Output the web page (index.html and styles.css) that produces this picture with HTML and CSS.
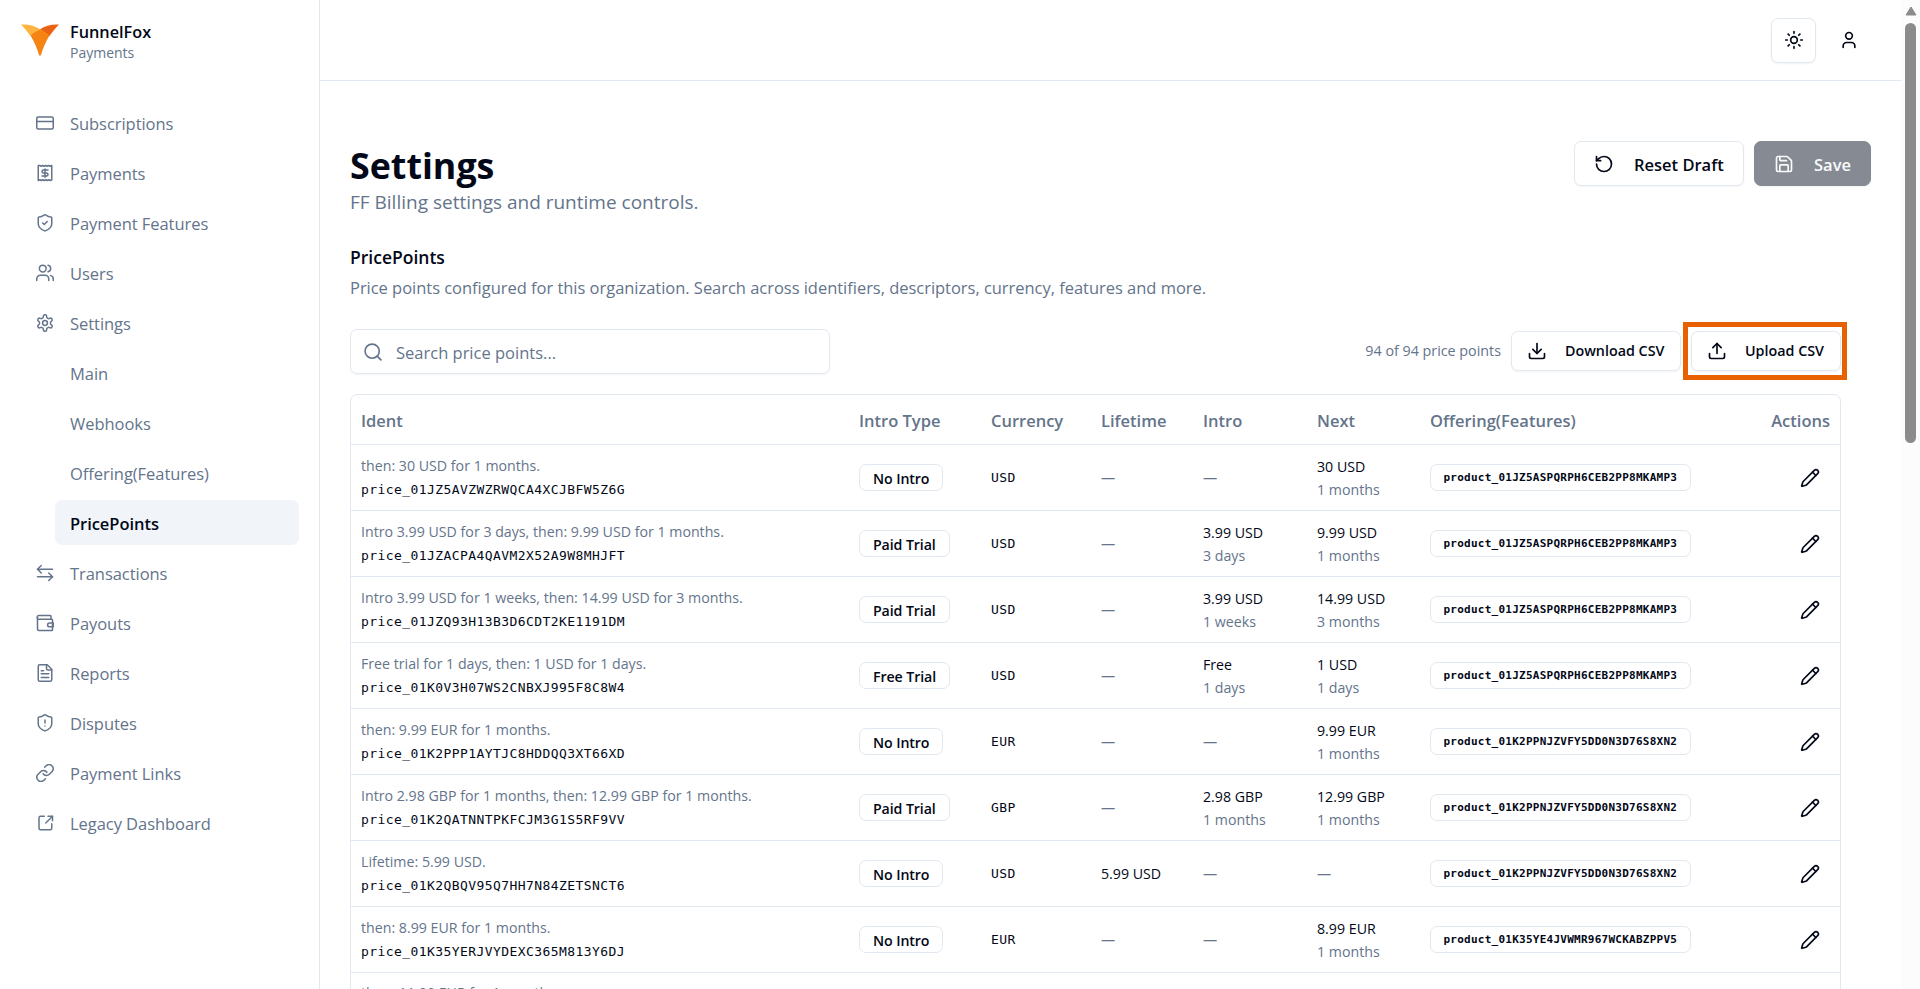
FILE: index.html
```html
<!DOCTYPE html>
<html lang="en">

<head>
  <meta charset="UTF-8">
  <meta name="viewport" content="width=device-width, initial-scale=1.0">
  <title>FunnelFox Payments - Settings</title>
  <link rel="stylesheet" href="styles.css">
</head>

<body>
  <!-- shared icons -->
  <svg class="sprite" width="0" height="0">
    <symbol id="pencil" viewBox="0 0 24 24">
      <path d="M21.174 6.812a1 1 0 0 0-3.986-3.987L3.842 16.174a2 2 0 0 0-.5.83l-1.321 4.352a.5.5 0 0 0 .623.622l4.353-1.32a2 2 0 0 0 .83-.497z" />
      <path d="m15 5 4 4" />
    </symbol>
  </svg>

  <div class="app">
    <aside class="sidebar">
      <div class="brand">
        <svg class="brand-logo" viewBox="0 0 38 32">
          <path d="M0 .5C7 0 14 1.500 19 5.200L9.500 12C6.500 8 3.500 4 0 .5z" fill="#ffb340" />
          <path d="M38 .5C31 0 24 1.500 19 5.200L28.500 12C31.500 8 34.500 4 38 .5z" fill="#ea6315" />
          <path d="M19 5.200C15.500 7 12 9 9.500 11.500C13 17 16 24 18 31Q19 32.500 20 31C22 24 25 17 28.500 11.500C26 9 22.500 7 19 5.200z" fill="#f58413" />
        </svg>
        <div>
          <p class="brand-name">FunnelFox</p>
          <p class="brand-sub">Payments</p>
        </div>
      </div>

      <nav class="nav">
        <a class="nav-item"><svg class="icon" viewBox="0 0 24 24"><rect width="22" height="16" x="1" y="4" rx="2" /><path d="M1 10h22" /></svg><span>Subscriptions</span></a>
        <a class="nav-item"><svg class="icon" viewBox="0 0 24 24"><path d="M3 2v20l2-1 2 1 2-1 2 1 2-1 2 1 2-1 2 1 2-1V2l-2 1-2-1-2 1-2-1-2 1-2-1-2 1-2-1z" /><path d="M16 8h-6a2 2 0 1 0 0 4h4a2 2 0 1 1 0 4H8" /><path d="M12 17.500v-11" /></svg><span>Payments</span></a>
        <a class="nav-item"><svg class="icon" viewBox="0 0 24 24"><path d="M21 13c0 5-3.500 7.500-8.660 9.450a1 1 0 0 1-.67-.01C6.500 20.500 3 18 3 13V5a1 1 0 0 1 1-1c2 0 5-1.200 7.240-2.720a1.170 1.170 0 0 1 1.520 0C15 2.810 18 4 20 4a1 1 0 0 1 1 1z" /><path d="m9 12 2 2 4-4" /></svg><span>Payment Features</span></a>
        <a class="nav-item"><svg class="icon" viewBox="0 0 24 24"><path d="M17 22v-2a5 5 0 0 0-5-5H6a5 5 0 0 0-5 5v2" /><circle cx="9" cy="6" r="4.500" /><path d="M23 22v-2a5 5 0 0 0-3.500-4.800" /><path d="M16 1.600a4.500 4.500 0 0 1 0 8.800" /></svg><span>Users</span></a>
        <a class="nav-item"><svg class="icon" viewBox="0 0 24 24"><path d="M12.220 1h-.44a2 2 0 0 0-2 2v.7a2 2 0 0 1-1 1.730l-.83.48a2 2 0 0 1-2 0l-.35-.2a2 2 0 0 0-2.730.73l-.22.38a2 2 0 0 0 .73 2.730l.35.25a2 2 0 0 1 1 1.720v.91a2 2 0 0 1-1 1.740l-.35.24a2 2 0 0 0-.73 2.730l.22.38a2 2 0 0 0 2.730.73l.35-.2a2 2 0 0 1 2 0l.83.48a2 2 0 0 1 1 1.730V21a2 2 0 0 0 2 2h.44a2 2 0 0 0 2-2v-.7a2 2 0 0 1 1-1.730l.83-.48a2 2 0 0 1 2 0l.35.2a2 2 0 0 0 2.730-.73l.22-.38a2 2 0 0 0-.73-2.730l-.35-.24a2 2 0 0 1-1-1.740v-.91a2 2 0 0 1 1-1.720l.35-.25a2 2 0 0 0 .73-2.730l-.22-.38a2 2 0 0 0-2.730-.73l-.35.2a2 2 0 0 1-2 0l-.83-.48a2 2 0 0 1-1-1.730V3a2 2 0 0 0-2-2z" /><circle cx="12" cy="12" r="3.200" /></svg><span>Settings</span></a>
        <div class="subnav">
          <a class="nav-item"><span>Main</span></a>
          <a class="nav-item"><span>Webhooks</span></a>
          <a class="nav-item"><span>Offering(Features)</span></a>
          <a class="nav-item is-active"><span>PricePoints</span></a>
        </div>
        <a class="nav-item"><svg class="icon" viewBox="0 0 24 24"><path d="m7 2-5 5 5 5" /><path d="M2 7h20" /><path d="m17 22 5-5-5-5" /><path d="M22 17H2" /></svg><span>Transactions</span></a>
        <a class="nav-item"><svg class="icon" viewBox="0 0 24 24"><path d="M20 7V3a1 1 0 0 0-1-1H4a2 2 0 0 0 0 5h17a1 1 0 0 1 1 1v13a1 1 0 0 1-1 1H4a2 2 0 0 1-2-2V4" /><path d="M23 12h-5a2 2 0 0 0 0 5h5z" /></svg><span>Payouts</span></a>
        <a class="nav-item"><svg class="icon" viewBox="0 0 24 24"><path d="M15 1H5a2 2 0 0 0-2 2v18a2 2 0 0 0 2 2h14a2 2 0 0 0 2-2V7z" /><path d="M14 1v5a2 2 0 0 0 2 2h5" /><path d="M10 9H7" /><path d="M17 13H7" /><path d="M17 18H7" /></svg><span>Reports</span></a>
        <a class="nav-item"><svg class="icon" viewBox="0 0 24 24"><path d="M21 13c0 5-3.500 7.500-8.660 9.450a1 1 0 0 1-.67-.01C6.500 20.500 3 18 3 13V5a1 1 0 0 1 1-1c2 0 5-1.200 7.240-2.720a1.170 1.170 0 0 1 1.520 0C15 2.810 18 4 20 4a1 1 0 0 1 1 1z" /><path d="M12 8v4" /><path d="M12 16h.01" /></svg><span>Disputes</span></a>
        <a class="nav-item"><svg class="icon" viewBox="0 0 24 24"><path d="M9.500 13a5.500 5.500 0 0 0 8.300.6l3.700-3.700a5.500 5.500 0 0 0-7.700-7.800L11.500 4.400" /><path d="M14.500 11a5.500 5.500 0 0 0-8.300-.6L2.500 14.100a5.500 5.500 0 0 0 7.700 7.800l2.300-2.300" /></svg><span>Payment Links</span></a>
        <a class="nav-item"><svg class="icon" viewBox="0 0 24 24"><path d="M16 3h6v6" /><path d="m13 12 9-9" /><path d="M21 13v6a2 2 0 0 1-2 2H6a2 2 0 0 1-2-2V5a2 2 0 0 1 2-2h5" /></svg><span>Legacy Dashboard</span></a>
      </nav>
    </aside>

    <main class="main">
      <header class="topbar">
        <button class="btn btn-icon"><svg class="icon icon-lg" viewBox="0 0 24 24"><circle cx="12" cy="12" r="4" /><path d="M12 2v2" /><path d="M12 20v2" /><path d="m4.930 4.930 1.410 1.410" /><path d="m17.660 17.660 1.410 1.410" /><path d="M2 12h2" /><path d="M20 12h2" /><path d="m6.340 17.660-1.410 1.410" /><path d="m19.070 4.930-1.410 1.410" /></svg></button>
        <svg class="icon icon-lg" viewBox="0 0 24 24"><path d="M19 21v-2a4 4 0 0 0-4-4H9a4 4 0 0 0-4 4v2" /><circle cx="12" cy="7" r="4" /></svg>
      </header>

      <div class="content">
        <div class="page-head">
          <div>
            <h1>Settings</h1>
            <p class="lead">FF Billing settings and runtime controls.</p>
          </div>
          <div class="page-actions">
            <button class="btn btn-reset"><svg class="icon icon-lg" viewBox="0 0 24 24"><path d="M3 12a9 9 0 1 0 9-9 9.750 9.750 0 0 0-6.740 2.740L3 8" /><path d="M3 3v5h5" /></svg><span>Reset Draft</span></button>
            <button class="btn btn-save" disabled><svg class="icon icon-lg" viewBox="0 0 24 24"><path d="M15.200 3a2 2 0 0 1 1.400.6l3.800 3.800a2 2 0 0 1 .6 1.400V19a2 2 0 0 1-2 2H5a2 2 0 0 1-2-2V5a2 2 0 0 1 2-2z" /><path d="M17 21v-7a1 1 0 0 0-1-1H8a1 1 0 0 0-1 1v7" /><path d="M7 3v4a1 1 0 0 0 1 1h7" /></svg><span>Save</span></button>
          </div>
        </div>

        <section class="section">
          <h2>PricePoints</h2>
          <p class="section-desc">Price points configured for this organization. Search across identifiers, descriptors, currency, features and more.</p>

          <div class="toolbar">
            <div class="search">
              <svg class="icon icon-lg" viewBox="0 0 24 24"><circle cx="11" cy="11" r="8.500" /><path d="m21.500 21.500-4.500-4.500" /></svg>
              <span>Search price points...</span>
            </div>
            <div class="toolbar-right">
              <span class="count">94 of 94 price points</span>
              <button class="btn btn-sm btn-download"><svg class="icon icon-lg" viewBox="0 0 24 24"><path d="M21 15v4a2 2 0 0 1-2 2H5a2 2 0 0 1-2-2v-4" /><path d="m7 10 5 5 5-5" /><path d="M12 15V3" /></svg>Download CSV</button>
              <button class="btn btn-sm btn-upload"><svg class="icon icon-lg" viewBox="0 0 24 24"><path d="M21 15v4a2 2 0 0 1-2 2H5a2 2 0 0 1-2-2v-4" /><path d="m17 8-5-5-5 5" /><path d="M12 3v12" /></svg>Upload CSV</button>
            </div>
          </div>

          <div class="table">
            <div class="row row-head">
              <span>Ident</span><span>Intro Type</span><span>Currency</span><span>Lifetime</span><span>Intro</span><span>Next</span><span>Offering(Features)</span><span class="right">Actions</span>
            </div>
            <div class="row">
              <div class="ident"><p>then: 30 USD for 1 months.</p><code>price_01JZ5AVZWZRWQCA4XCJBFW5Z6G</code></div>
              <div><span class="badge">No Intro</span></div>
              <code>USD</code>
              <div class="muted">—</div>
              <div class="muted">—</div>
              <div class="price"><p>30 USD</p><p class="muted">1 months</p></div>
              <div><span class="badge badge-code">product_01JZ5ASPQRPH6CEB2PP8MKAMP3</span></div>
              <div class="edit"><svg class="icon"><use href="#pencil" /></svg></div>
            </div>
            <div class="row">
              <div class="ident"><p>Intro 3.99 USD for 3 days, then: 9.99 USD for 1 months.</p><code>price_01JZACPA4QAVM2X52A9W8MHJFT</code></div>
              <div><span class="badge">Paid Trial</span></div>
              <code>USD</code>
              <div class="muted">—</div>
              <div class="price"><p>3.99 USD</p><p class="muted">3 days</p></div>
              <div class="price"><p>9.99 USD</p><p class="muted">1 months</p></div>
              <div><span class="badge badge-code">product_01JZ5ASPQRPH6CEB2PP8MKAMP3</span></div>
              <div class="edit"><svg class="icon"><use href="#pencil" /></svg></div>
            </div>
            <div class="row">
              <div class="ident"><p>Intro 3.99 USD for 1 weeks, then: 14.99 USD for 3 months.</p><code>price_01JZQ93H13B3D6CDT2KE1191DM</code></div>
              <div><span class="badge">Paid Trial</span></div>
              <code>USD</code>
              <div class="muted">—</div>
              <div class="price"><p>3.99 USD</p><p class="muted">1 weeks</p></div>
              <div class="price"><p>14.99 USD</p><p class="muted">3 months</p></div>
              <div><span class="badge badge-code">product_01JZ5ASPQRPH6CEB2PP8MKAMP3</span></div>
              <div class="edit"><svg class="icon"><use href="#pencil" /></svg></div>
            </div>
            <div class="row">
              <div class="ident"><p>Free trial for 1 days, then: 1 USD for 1 days.</p><code>price_01K0V3H07WS2CNBXJ995F8C8W4</code></div>
              <div><span class="badge">Free Trial</span></div>
              <code>USD</code>
              <div class="muted">—</div>
              <div class="price"><p>Free</p><p class="muted">1 days</p></div>
              <div class="price"><p>1 USD</p><p class="muted">1 days</p></div>
              <div><span class="badge badge-code">product_01JZ5ASPQRPH6CEB2PP8MKAMP3</span></div>
              <div class="edit"><svg class="icon"><use href="#pencil" /></svg></div>
            </div>
            <div class="row">
              <div class="ident"><p>then: 9.99 EUR for 1 months.</p><code>price_01K2PPP1AYTJC8HDDQQ3XT66XD</code></div>
              <div><span class="badge">No Intro</span></div>
              <code>EUR</code>
              <div class="muted">—</div>
              <div class="muted">—</div>
              <div class="price"><p>9.99 EUR</p><p class="muted">1 months</p></div>
              <div><span class="badge badge-code">product_01K2PPNJZVFY5DD0N3D76S8XN2</span></div>
              <div class="edit"><svg class="icon"><use href="#pencil" /></svg></div>
            </div>
            <div class="row">
              <div class="ident"><p>Intro 2.98 GBP for 1 months, then: 12.99 GBP for 1 months.</p><code>price_01K2QATNNTPKFCJM3G1S5RF9VV</code></div>
              <div><span class="badge">Paid Trial</span></div>
              <code>GBP</code>
              <div class="muted">—</div>
              <div class="price"><p>2.98 GBP</p><p class="muted">1 months</p></div>
              <div class="price"><p>12.99 GBP</p><p class="muted">1 months</p></div>
              <div><span class="badge badge-code">product_01K2PPNJZVFY5DD0N3D76S8XN2</span></div>
              <div class="edit"><svg class="icon"><use href="#pencil" /></svg></div>
            </div>
            <div class="row">
              <div class="ident"><p>Lifetime: 5.99 USD.</p><code>price_01K2QBQV95Q7HH7N84ZETSNCT6</code></div>
              <div><span class="badge">No Intro</span></div>
              <code>USD</code>
              <div>5.99 USD</div>
              <div class="muted">—</div>
              <div class="muted">—</div>
              <div><span class="badge badge-code">product_01K2PPNJZVFY5DD0N3D76S8XN2</span></div>
              <div class="edit"><svg class="icon"><use href="#pencil" /></svg></div>
            </div>
            <div class="row">
              <div class="ident"><p>then: 8.99 EUR for 1 months.</p><code>price_01K35YERJVYDEXC365M813Y6DJ</code></div>
              <div><span class="badge">No Intro</span></div>
              <code>EUR</code>
              <div class="muted">—</div>
              <div class="muted">—</div>
              <div class="price"><p>8.99 EUR</p><p class="muted">1 months</p></div>
              <div><span class="badge badge-code">product_01K35YE4JVWMR967WCKABZPPV5</span></div>
              <div class="edit"><svg class="icon"><use href="#pencil" /></svg></div>
            </div>
            <div class="row row-last">
              <div class="ident"><p>then: 11.99 EUR for 1 months.</p></div>
            </div>
          </div>
        </section>
      </div>
    </main>

    <div class="scrollbar">
      <svg class="arrow" viewBox="0 0 12 10"><path d="M6 1 11 9H1z" /></svg>
      <div class="thumb"></div>
      <svg class="arrow arrow-down" viewBox="0 0 12 10"><path d="M6 9 1 1h10z" /></svg>
    </div>
  </div>
</body>

</html>
```
FILE: styles.css
```css
:root {
  --fg: #020817;
  --muted: #64748b;
  --border: #e2e8f0;
  --accent: #f1f5f9;
  --highlight: #e86100;
}

*,
*:before,
*:after {
  box-sizing: border-box;
}

body {
  margin: 0;
  height: 100vh;
  overflow: hidden;
  background: #fff;
  color: var(--fg);
  font-family: "Open Sans", sans-serif;
  font-size: 16.5px;
}

h1,
h2,
p {
  margin: 0;
}

.sprite {
  display: none;
}

.app {
  display: grid;
  grid-template-columns: 320px 1fr 19px;
  height: 989px;
  overflow: hidden;
}

.icon {
  width: 18px;
  height: 18px;
  flex: none;
  fill: none;
  stroke: currentColor;
  stroke-width: 2;
  stroke-linecap: round;
  stroke-linejoin: round;
}

.icon-lg {
  width: 20px;
  height: 20px;
}

/* sidebar */
.sidebar {
  border-right: 1px solid var(--border);
}

.brand {
  display: flex;
  gap: 11px;
  height: 80px;
  padding: 20px 0 0 21px;
}

.brand-logo {
  width: 38px;
  height: 32px;
  margin-top: 4px;
}

.brand-name {
  padding-top: 1px;
  font-size: 16.3px;
  line-height: 22px;
  font-weight: 600;
}

.brand-sub {
  font-size: 14px;
  line-height: 19px;
  color: var(--muted);
}

.nav {
  display: flex;
  flex-direction: column;
  gap: 5px;
  padding: 20px 20px 0 21px;
}

.nav-item {
  display: flex;
  align-items: center;
  gap: 16px;
  height: 45px;
  padding: 0 15px;
  border-radius: 7px;
  color: var(--muted);
}

.nav-item span {
  padding-top: 2px;
  letter-spacing: -0.05px;
}

.subnav {
  display: flex;
  flex-direction: column;
  gap: 5px;
  padding-left: 34px;
}

.is-active {
  background: var(--accent);
  color: var(--fg);
  font-weight: 600;
}

/* top bar */
.main {
  min-width: 0;
}

.topbar {
  display: flex;
  align-items: center;
  justify-content: flex-end;
  gap: 23px;
  height: 81px;
  padding-right: 42px;
  border-bottom: 1px solid var(--border);
}

.btn {
  display: flex;
  align-items: center;
  gap: 20px;
  height: 45px;
  padding: 0 19px;
  border: 1px solid var(--border);
  border-radius: 7px;
  background: #fff;
  box-shadow: 0 1px 2px rgba(0, 0, 0, 0.05);
  color: var(--fg);
  font-family: inherit;
  font-size: 16.5px;
  font-weight: 600;
  white-space: nowrap;
}

.btn span {
  padding-top: 2px;
}

.btn-icon {
  width: 45px;
  padding: 0;
  justify-content: center;
}

.btn-reset {
  width: 170px;
}

.btn-save {
  width: 117px;
  border-color: #868a92;
  background: #868a92;
  color: #fafbfc;
}

.btn-sm {
  height: 40px;
  padding: 0 15px;
  font-size: 14.3px;
  gap: 18px;
}

.btn-download {
  width: 170px;
}

.btn-upload {
  position: relative;
  width: 150px;
}

/* callout frame over the upload button */
.btn-upload:after {
  content: "";
  position: absolute;
  top: -10px;
  right: -7px;
  bottom: -10px;
  left: -9px;
  border: 5px solid var(--highlight);
}

/* page */
.content {
  padding: 60px 30px 0;
}

.page-head {
  display: flex;
  justify-content: space-between;
  height: 100px;
}

h1 {
  font-size: 35.8px;
  line-height: 48px;
  font-weight: 700;
}

.lead {
  font-size: 19px;
  line-height: 26px;
  color: var(--muted);
}

.page-actions {
  display: flex;
  gap: 10px;
}

h2 {
  font-size: 17.5px;
  line-height: 32px;
  font-weight: 600;
}

.section {
  width: 1491px;
}

.section-desc {
  font-size: 16.5px;
  line-height: 30px;
  letter-spacing: -0.03px;
  color: var(--muted);
}

.toolbar {
  display: flex;
  align-items: center;
  justify-content: space-between;
  margin-top: 26px;
  height: 45px;
}

.search {
  display: flex;
  align-items: center;
  gap: 13px;
  width: 480px;
  height: 45px;
  padding: 0 12px;
  border: 1px solid var(--border);
  border-radius: 7px;
  box-shadow: 0 1px 2px rgba(0, 0, 0, 0.05);
  color: var(--muted);
}

.search span {
  padding-top: 2px;
}

.toolbar-right {
  display: flex;
  align-items: center;
  gap: 10px;
  padding-bottom: 2px;
}

.count {
  font-size: 14.3px;
  color: var(--muted);
}

/* table */
.table {
  margin-top: 20px;
  border: 1px solid var(--border);
  border-radius: 7px;
}

.row {
  display: grid;
  grid-template-columns: 498px 132px 110px 102px 114px 113px 320px 1fr;
  align-items: center;
  height: 66px;
  border-bottom: 1px solid var(--border);
  font-size: 14.2px;
}

.row > * {
  padding: 0 10px;
}

.row-head {
  height: 50px;
  padding-top: 2px;
  color: var(--muted);
  font-size: 16.5px;
  font-weight: 600;
}

.row-last {
  align-items: start;
  padding-top: 8px;
}

.right {
  text-align: right;
}

.ident p {
  line-height: 23px;
  color: var(--muted);
}

code {
  font-family: "DejaVu Sans Mono", monospace;
  font-size: 13px;
  letter-spacing: 0.42px;
}

.ident code {
  display: block;
  padding-top: 1px;
  line-height: 24px;
}

.price p {
  line-height: 23px;
}

.muted {
  color: var(--muted);
}

.badge {
  display: inline-flex;
  align-items: center;
  height: 27px;
  padding: 1px 13px 0;
  border: 1px solid var(--border);
  border-radius: 7px;
  font-size: 14.2px;
  font-weight: 600;
  letter-spacing: -0.1px;
}

.badge-code {
  padding: 0 12.5px;
  font-family: "DejaVu Sans Mono", monospace;
  font-size: 11px;
  font-weight: 700;
  letter-spacing: 0.25px;
}

.edit {
  display: flex;
  justify-content: flex-end;
}

.edit .icon {
  width: 20px;
  height: 20px;
  margin-right: 10px;
}

/* scrollbar */
.scrollbar {
  display: flex;
  flex-direction: column;
  align-items: center;
  padding: 6px 0 5px;
  background: #fcfcfc;
}

.arrow {
  width: 12px;
  height: 10px;
  fill: #8b8b8b;
  stroke: #8b8b8b;
  stroke-linejoin: round;
}

.thumb {
  width: 11px;
  height: 420px;
  margin-top: 7px;
  border-radius: 6px;
  background: #8b8b8b;
}

.arrow-down {
  margin-top: auto;
}
```
